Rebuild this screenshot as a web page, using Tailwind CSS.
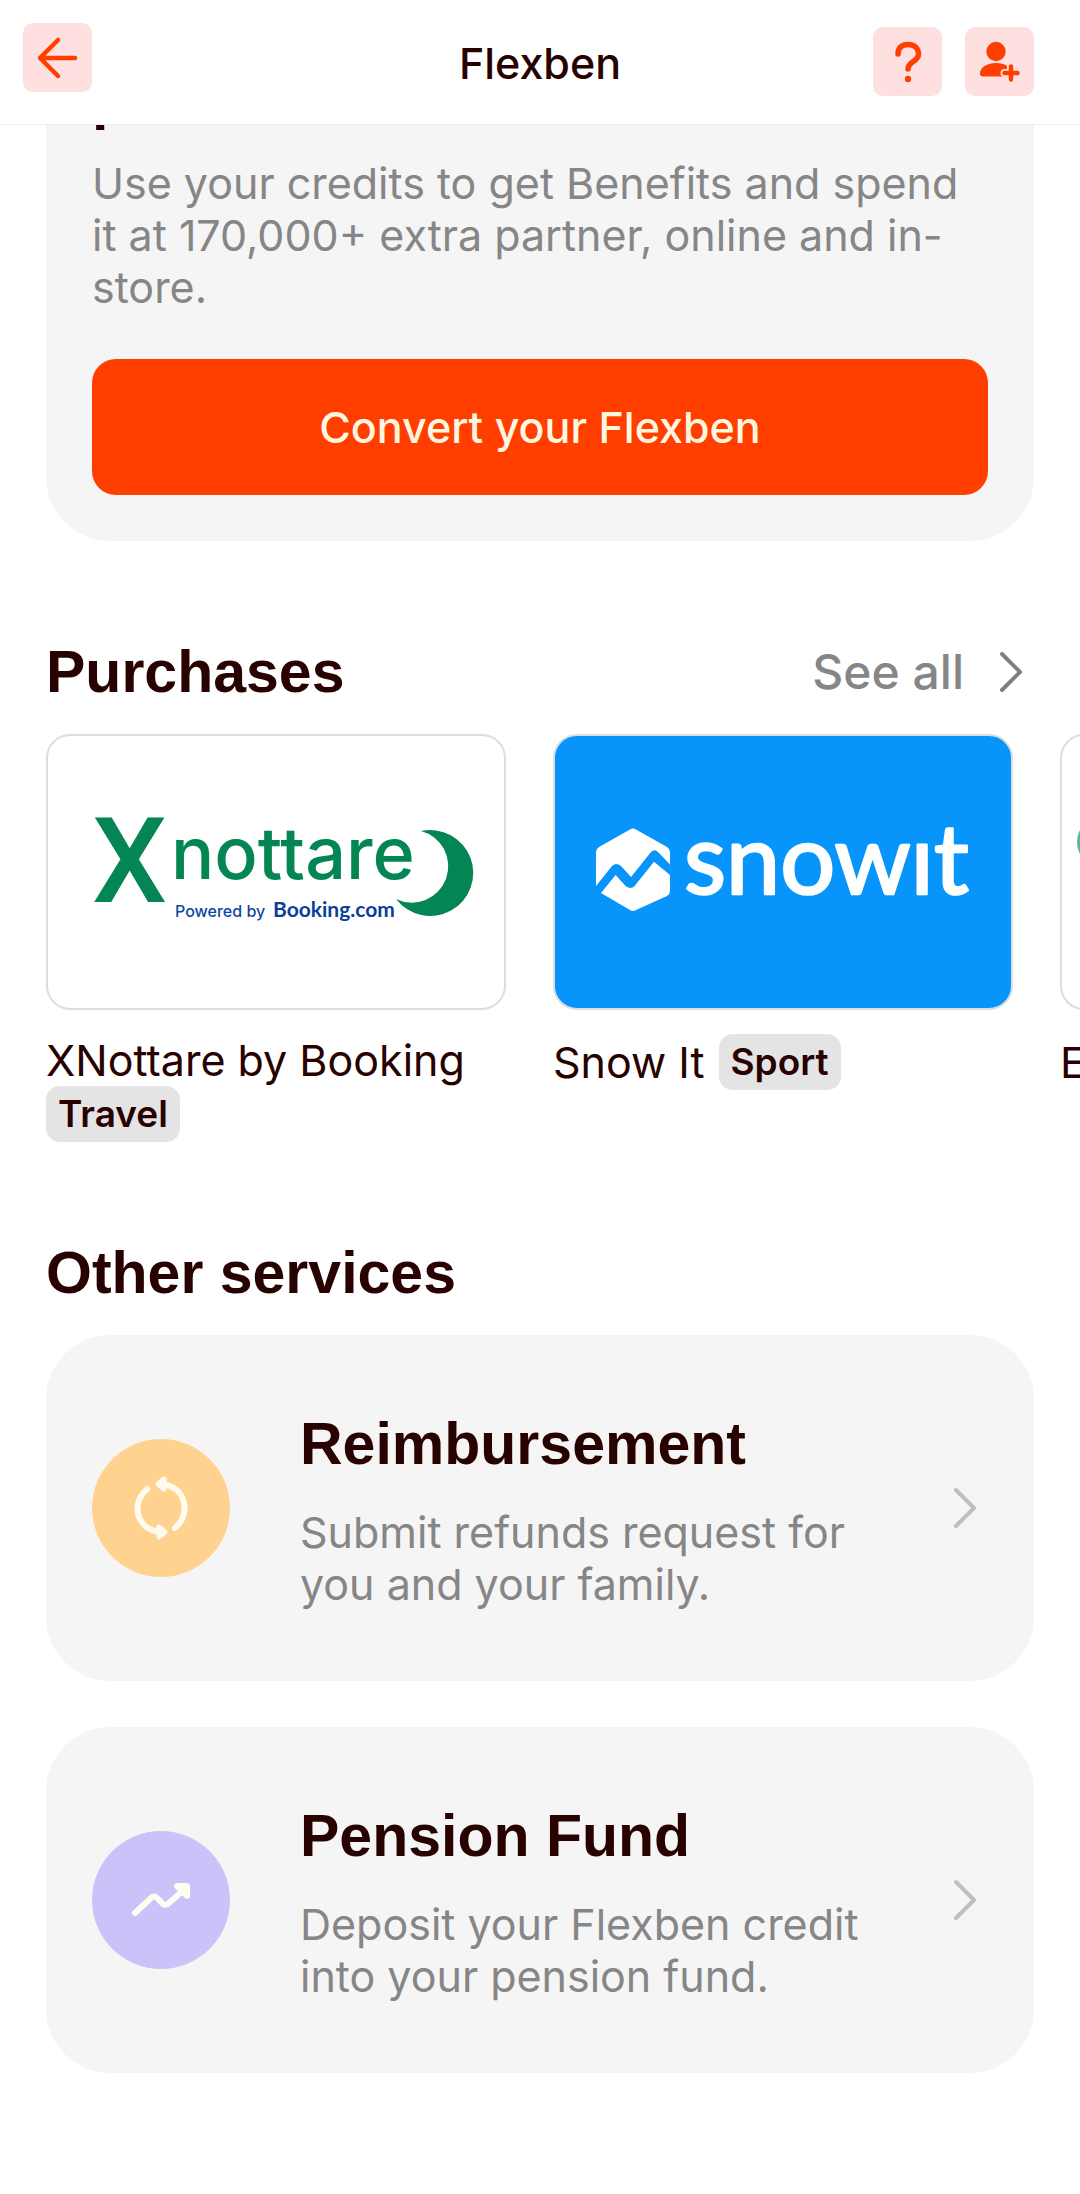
<!DOCTYPE html>
<html lang="en">
<head>
    <meta charset="UTF-8">
    <meta name="viewport" content="width=device-width, initial-scale=1.0">
    <title>Flexben</title>
    <script src="https://cdn.jsdelivr.net/npm/@tailwindcss/browser@4"></script>
</head>
<body class="bg-white font-['Inter',sans-serif] text-[43px] leading-[52px] text-[#280200] overflow-x-hidden">
    <header class="fixed inset-x-0 top-0 z-10 grid h-[125px] grid-cols-[1fr_auto_1fr] items-start border-b border-[#eeeeee] bg-white px-[23px] pt-[23px]">
        <button type="button" aria-label="Back" class="flex h-[69px] w-[69px] items-center justify-center rounded-[10px] bg-[#ffe0e0]">
            <svg class="h-[48px] w-[48px]" viewBox="0 0 48 48" fill="none" stroke="#ff3e00" stroke-width="4.5" stroke-linecap="round" stroke-linejoin="round">
                <path d="M41 24H6M24 6L6 24l18 18"/>
            </svg>
        </button>
        <h1 class="pt-[14px] font-medium">Flexben</h1>
        <div class="mr-[23px] flex justify-end gap-[23px] pt-1">
            <button type="button" aria-label="Help" class="flex h-[69px] w-[69px] items-center justify-center rounded-[10px] bg-[#ffe0e0]">
                <svg class="h-[48px] w-[48px]" viewBox="0 0 48 48" fill="none">
                    <path d="M14 16C14 9.500 18 6.500 24 6.500S34.500 10 34.500 16C34.500 24 24 23 24 31" stroke="#ff3e00" stroke-width="5.5" stroke-linecap="round" stroke-linejoin="round"/>
                    <circle cx="24" cy="41" r="3.2" fill="#ff3e00"/>
                </svg>
            </button>
            <button type="button" aria-label="Invite a person" class="flex h-[69px] w-[69px] items-center justify-center rounded-[10px] bg-[#ffe0e0]">
                <svg class="h-[48px] w-[48px]" viewBox="0 0 48 48" fill="none">
                    <circle cx="20" cy="13.500" r="9.7" fill="#ff3e00"/>
                    <path d="M4 35.500c0-6 7-10.500 16-10.500s16 4.500 16 10.500c0 2-1 3-3 3H7c-2 0-3-1-3-3z" fill="#ff3e00"/>
                    <path d="M35 28.500v13M28.500 35h13" stroke="#ffe0e0" stroke-width="8" stroke-linecap="round"/>
                    <path d="M35 28.500v13M28.500 35h13" stroke="#ff3e00" stroke-width="4.5" stroke-linecap="round"/>
                </svg>
            </button>
        </div>
    </header>

    <main class="pt-5 pb-[120px]">
        <section class="mx-[46px] rounded-[64px] bg-[#f5f5f5] p-[46px]">
            <h2 class="font-['Liberation_Sans',sans-serif] text-[59px] leading-[64px] font-bold">partners</h2>
            <p class="mt-[27px] text-[#868686]">Use your credits to get Benefits and spend it at 170,000+ extra partner, online and in-store.</p>
            <button type="button" class="mt-[46px] h-[136px] w-full rounded-3xl bg-[#ff3e00] font-medium text-[#fff6e0]">Convert your Flexben</button>
        </section>

        <section class="mt-[99px]">
            <div class="mx-[46px] flex items-center justify-between">
                <h2 class="font-['Liberation_Sans',sans-serif] text-[59px] leading-[64px] font-bold">Purchases</h2>
                <a href="#" class="flex items-center gap-[34px] pr-[10px] text-[48px] font-medium text-[#868686]">
                    See all
                    <svg class="h-[42px] w-[26px]" viewBox="0 0 26 42" fill="none" stroke="#808080" stroke-width="4" stroke-linecap="round" stroke-linejoin="round">
                        <path d="M4 3l18 18L4 39"/>
                    </svg>
                </a>
            </div>
            <div class="mt-[30px] flex gap-[47px] overflow-hidden pl-[46px]">
                <a href="#" class="w-[460px] shrink-0">
                    <div class="overflow-hidden rounded-3xl border-2 border-[#dddddd]">
                        <svg class="block w-full" viewBox="2 2 456 272" role="img" aria-label="Xnottare">
                            <text x="46" y="168" class="font-['Roboto',sans-serif] text-[119px] font-medium" fill="#048654">X</text>
                            <text x="125" y="145" class="text-[72px] font-medium" fill="#048654">nottare</text>
                            <path d="M375 97A43 43 0 1 1 350 165A36.400 36.400 0 1 0 375 97Z" fill="#048654"/>
                            <text x="129" y="183" class="text-[16px] font-medium" fill="#0c47a1">Powered by</text>
                            <text x="227" y="183" class="font-['Lato',sans-serif] text-[21px] font-bold" fill="#0b3f9a">Booking.com</text>
                        </svg>
                    </div>
                    <div class="mt-6 flex min-h-14 flex-wrap items-center gap-x-[14px]">
                        <span>XNottare by Booking</span>
                        <span class="rounded-[14px] bg-[#e4e4e4] px-3 py-[2px] text-[37px] font-semibold">Travel</span>
                    </div>
                </a>
                <a href="#" class="w-[460px] shrink-0">
                    <div class="overflow-hidden rounded-3xl border-2 border-[#dddddd] bg-[#0895fb]">
                        <svg class="block w-full" viewBox="2 2 456 272" role="img" aria-label="snowit">
                            <path d="M43 152V118q0-3 3-5L77 95.500q3-2 6 0L114 113q3 2 3 5v12.500L106 119q-4-5-8-1L78 143l-10-11q-5-4-9 0z" fill="#fff"/>
                            <path d="M48 159l14.600-18 10 11q5 4 9 0L101 127.700 117 141v16q0 3-3 5L83 176q-3 2-6 0z" fill="#fff"/>
                            <text x="131" y="160" class="font-['Lato',sans-serif] text-[97px]" fill="#fff" stroke="#fff" stroke-width="2.5" stroke-linejoin="round">snowıt</text>
                        </svg>
                    </div>
                    <div class="mt-6 flex min-h-14 flex-wrap items-center gap-x-[14px]">
                        <span>Snow It</span>
                        <span class="rounded-[14px] bg-[#e4e4e4] px-3 py-[2px] text-[37px] font-semibold">Sport</span>
                    </div>
                </a>
                <a href="#" class="w-[460px] shrink-0">
                    <div class="overflow-hidden rounded-3xl border-2 border-[#dddddd]">
                        <svg class="block w-full" viewBox="2 2 456 272" aria-hidden="true">
                            <circle cx="42" cy="108" r="25" fill="#5cb892"/>
                        </svg>
                    </div>
                    <div class="mt-6 flex min-h-14 flex-wrap items-center gap-x-[14px]">
                        <span>E</span>
                    </div>
                </a>
            </div>
        </section>

        <section class="mx-[46px] mt-[99px]">
            <h2 class="font-['Liberation_Sans',sans-serif] text-[59px] leading-[64px] font-bold">Other services</h2>
            <div class="mt-[30px] flex flex-col gap-[46px]">
                <a href="#" class="flex items-center rounded-[64px] bg-[#f5f5f5] px-[46px] py-[71px]">
                    <span class="flex h-[138px] w-[138px] shrink-0 items-center justify-center rounded-full bg-[#ffd28f]">
                        <svg class="h-[72px] w-[72px]" viewBox="0 0 72 72" fill="none" stroke="#fffbee" stroke-width="6" stroke-linecap="round" stroke-linejoin="round">
                            <path d="M22.500 17C6 30 10 56 34 60M50 56C66 43 62 16 38 12"/>
                            <path d="M39 7L33 12L39 17ZM34 55L40 60L34 65Z" fill="#fffbee" stroke-width="5"/>
                        </svg>
                    </span>
                    <div class="ml-[70px] flex-1 pt-1.5">
                        <h3 class="font-['Liberation_Sans',sans-serif] text-[59px] leading-[64px] font-bold">Reimbursement</h3>
                        <p class="mt-[30px] max-w-[600px] text-[#868686]">Submit refunds request for you and your family.</p>
                    </div>
                    <svg class="mr-[10px] h-[42px] w-[26px] shrink-0" viewBox="0 0 26 42" fill="none" stroke="#bfbfbf" stroke-width="4" stroke-linecap="round" stroke-linejoin="round">
                        <path d="M4 3l18 18L4 39"/>
                    </svg>
                </a>
                <a href="#" class="flex items-center rounded-[64px] bg-[#f5f5f5] px-[46px] py-[71px]">
                    <span class="flex h-[138px] w-[138px] shrink-0 items-center justify-center rounded-full bg-[#ccc2fa]">
                        <svg class="h-[72px] w-[72px]" viewBox="0 0 72 72" fill="none" stroke="#fffdf2" stroke-width="6" stroke-linecap="round" stroke-linejoin="round">
                            <path d="M10 49L26 34Q29 31 32 34L38 40Q41 42 44 39L60 25"/>
                            <path d="M52 22H62V32Z" fill="#fffdf2"/>
                        </svg>
                    </span>
                    <div class="ml-[70px] flex-1 pt-1.5">
                        <h3 class="font-['Liberation_Sans',sans-serif] text-[59px] leading-[64px] font-bold">Pension Fund</h3>
                        <p class="mt-[30px] max-w-[600px] text-[#868686]">Deposit your Flexben credit into your pension fund.</p>
                    </div>
                    <svg class="mr-[10px] h-[42px] w-[26px] shrink-0" viewBox="0 0 26 42" fill="none" stroke="#bfbfbf" stroke-width="4" stroke-linecap="round" stroke-linejoin="round">
                        <path d="M4 3l18 18L4 39"/>
                    </svg>
                </a>
            </div>
        </section>
    </main>
</body>
</html>
